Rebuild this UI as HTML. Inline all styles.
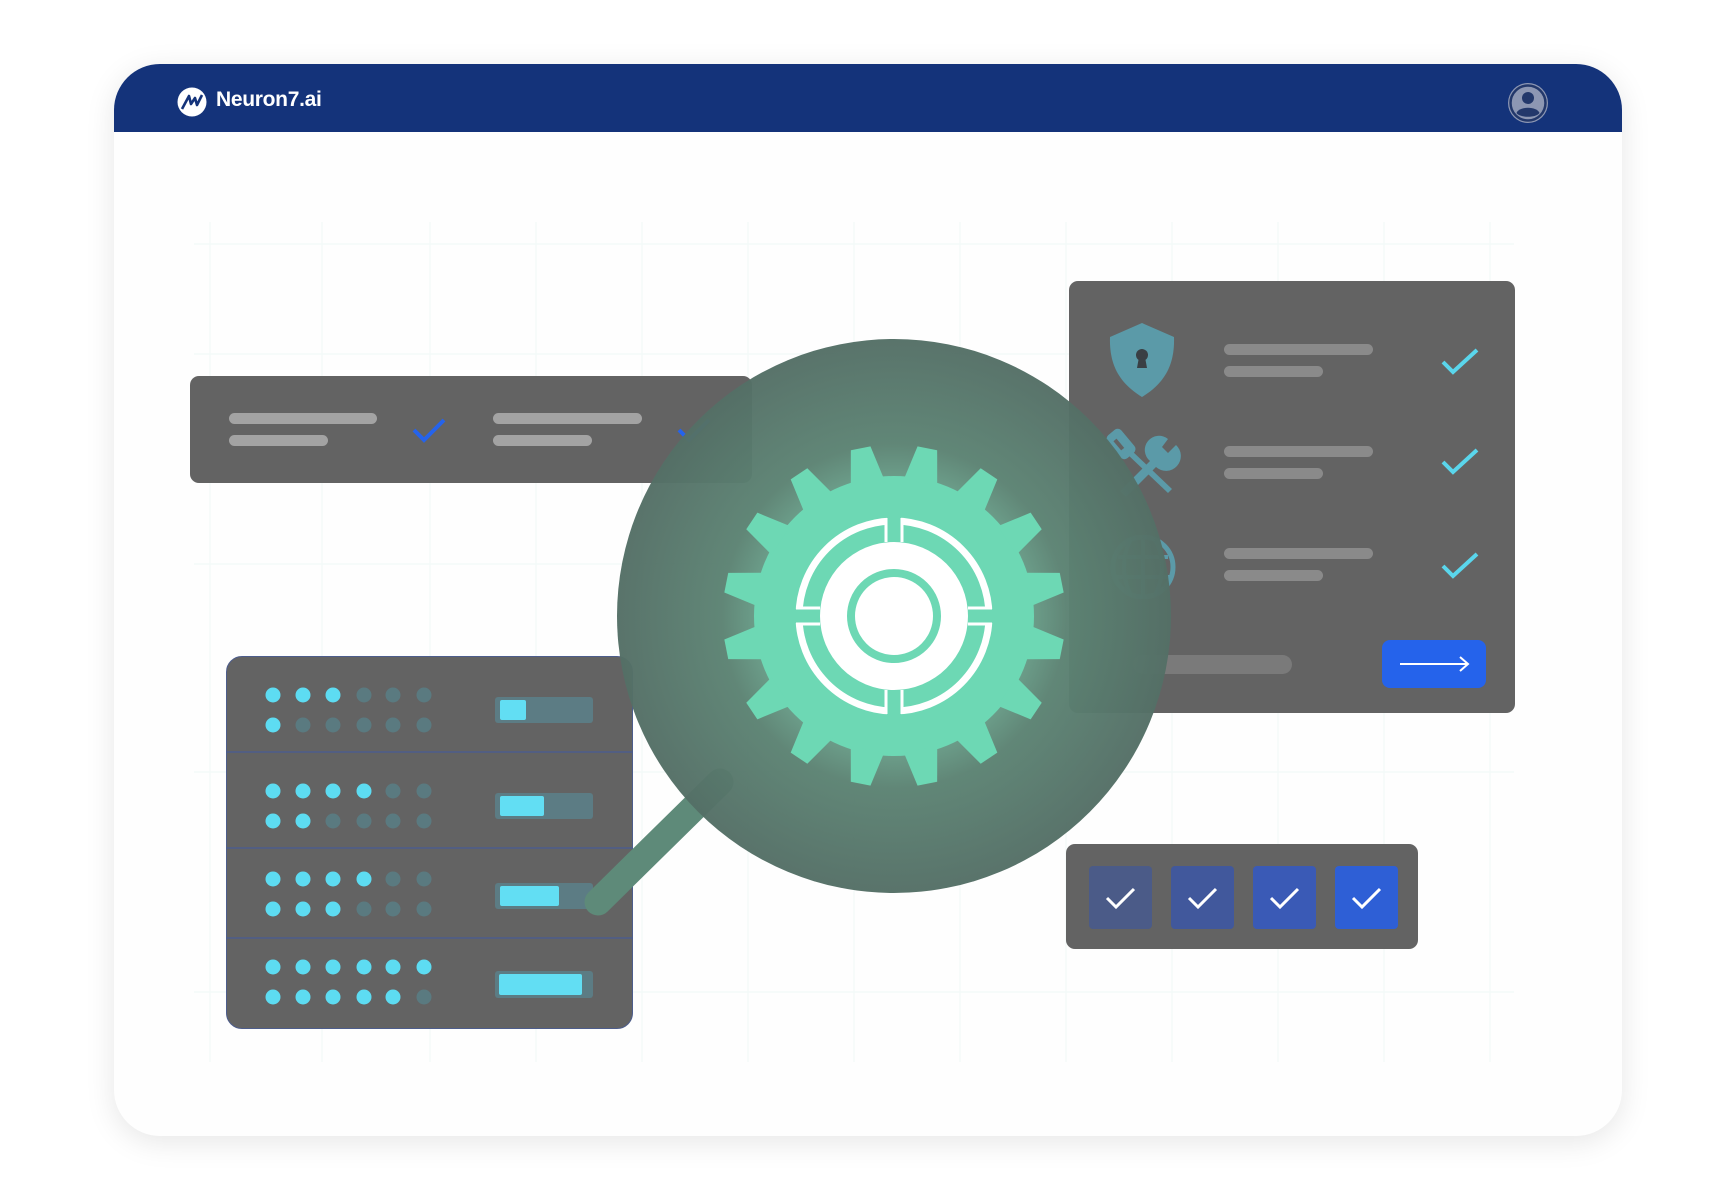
<!DOCTYPE html>
<html><head><meta charset="utf-8"><style>
html,body{margin:0;padding:0;background:#fff;}
body{width:1734px;height:1200px;position:relative;overflow:hidden;font-family:"Liberation Sans",sans-serif;}
.card{position:absolute;left:114px;top:64px;width:1508px;height:1072px;border-radius:46px;background:#fefefe;box-shadow:0 6px 30px rgba(0,0,0,0.10);overflow:hidden;}
.hdr{position:absolute;left:0;top:0;width:100%;height:68px;background:#14337a;}
.abs{position:absolute;}
.panel{position:absolute;background:#636363;border-radius:9px;}
.ln{position:absolute;background:#a3a3a3;border-radius:6px;height:11px;}
.ln2{position:absolute;background:#8a8a8a;border-radius:6px;height:11px;}
</style></head><body>
<div class="card">
  <div class="hdr">
    <svg class="abs" style="left:63px;top:23px" width="30" height="30" viewBox="0 0 30 30">
      <circle cx="15" cy="15" r="14.5" fill="#fff"/>
      <path d="M5 22 L12 9 L14 17 L18 11 L20 18 L25 8" fill="none" stroke="#14337a" stroke-width="2.6" stroke-linejoin="round"/>
    </svg>
    <div class="abs" style="left:102px;top:24px;color:#fff;font-size:21px;font-weight:bold;letter-spacing:-0.3px;">Neuron7.ai</div>
    <svg class="abs" style="left:1393px;top:18px" width="42" height="42" viewBox="0 0 42 42">
      <circle cx="21" cy="21" r="20" fill="#8d97b3"/>
      <circle cx="21" cy="21" r="17.5" fill="none" stroke="#23386b" stroke-width="2.5"/>
      <circle cx="21" cy="16" r="6" fill="#23386b"/>
      <path d="M9.5 31 C12 24 30 24 32.5 31 C29 36 13 36 9.5 31Z" fill="#23386b"/>
    </svg>
  </div>
  <svg class="abs" style="left:0;top:68px" width="1508" height="1004">
    <g stroke="#f2f9f8" stroke-width="1.2" fill="none">
      <path d="M96 90V930 M208 90V930 M316 90V930 M422 90V930 M528 90V930 M634 90V930 M740 90V930 M846 90V930 M952 90V930 M1058 90V930 M1164 90V930 M1270 90V930 M1376 90V930"/>
      <path d="M80 112H1400 M80 222H1400 M80 432H1400 M80 640H1400 M80 860H1400"/>
    </g>
  </svg>
</div>

<div class="panel" style="left:190px;top:376px;width:562px;height:107px;">
  <div class="ln" style="left:39px;top:37px;width:148px"></div>
  <div class="ln" style="left:39px;top:59px;width:99px"></div>
  <svg class="abs" style="left:220px;top:40px" width="40" height="30"><path d="M4 14 L14 24 L34 4" fill="none" stroke="#2563eb" stroke-width="4"/></svg>
  <div class="ln" style="left:303px;top:37px;width:149px"></div>
  <div class="ln" style="left:303px;top:59px;width:99px"></div>
  <svg class="abs" style="left:485px;top:40px" width="40" height="30"><path d="M4 14 L14 24 L34 4" fill="none" stroke="#2563eb" stroke-width="4"/></svg>
</div>

<div class="panel" style="left:1069px;top:281px;width:446px;height:432px;">
  <svg class="abs" style="left:39px;top:41px" width="68" height="76" viewBox="0 0 68 76">
    <path d="M34 1 L66 15 C67 45 55 62 34 75 C13 62 1 45 2 15 Z" fill="#5b9aa8"/>
    <circle cx="34" cy="33" r="6" fill="#3a3f44"/><path d="M31 35 L29 46 H39 L37 35Z" fill="#3a3f44"/>
  </svg>
  <div class="ln2" style="left:155px;top:63px;width:149px"></div>
  <div class="ln2" style="left:155px;top:85px;width:99px"></div>
  <svg class="abs" style="left:370px;top:65px" width="42" height="32"><path d="M4 16 L14 26 L38 4" fill="none" stroke="#5ad6ec" stroke-width="4"/></svg>
  <svg class="abs" style="left:37px;top:144px" width="76" height="72" viewBox="0 0 76 72">
    <g fill="#5b9aa8"><rect x="6" y="4" width="18" height="30" rx="5" transform="rotate(-40 15 19)"/>
    <path d="M20 28 L62 68 L66 64 L24 24Z"/>
    <path d="M14 66 L44 36 A14 14 0 0 1 62 14 L56 22 L62 28 L70 20 A14 14 0 0 1 50 42 L20 72Z"/></g>
    <rect x="11" y="12" width="4" height="12" fill="#636363" transform="rotate(-40 15 19)"/>
  </svg>
  <div class="ln2" style="left:155px;top:165px;width:149px"></div>
  <div class="ln2" style="left:155px;top:187px;width:99px"></div>
  <svg class="abs" style="left:370px;top:165px" width="42" height="32"><path d="M4 16 L14 26 L38 4" fill="none" stroke="#5ad6ec" stroke-width="4"/></svg>
  <svg class="abs" style="left:39px;top:254px" width="70" height="64" viewBox="0 0 70 64">
    <circle cx="35" cy="32" r="30" fill="none" stroke="#5b9aa8" stroke-width="5"/>
    <path d="M10 22H60 M8 42H62 M35 3V61 M22 6C14 22 14 42 22 58 M48 6C56 22 56 42 48 58" stroke="#5b9aa8" stroke-width="4" fill="none"/>
  </svg>
  <div class="ln2" style="left:155px;top:267px;width:149px"></div>
  <div class="ln2" style="left:155px;top:289px;width:99px"></div>
  <svg class="abs" style="left:370px;top:269px" width="42" height="32"><path d="M4 16 L14 26 L38 4" fill="none" stroke="#5ad6ec" stroke-width="4"/></svg>
  <div class="abs" style="left:64px;top:374px;width:159px;height:19px;border-radius:10px;background:#7a7a7a"></div>
  <div class="abs" style="left:313px;top:359px;width:104px;height:48px;border-radius:8px;background:#2563eb">
    <svg class="abs" style="left:16px;top:14px" width="74" height="20"><path d="M2 10H70 M62 3 L70 10 L62 17" fill="none" stroke="#fff" stroke-width="2"/></svg>
  </div>
</div>

<div class="panel" style="left:226px;top:656px;width:407px;height:373px;border:1px solid #4d5d8c;box-sizing:border-box;border-radius:16px;"></div>
<svg class="abs" style="left:226px;top:656px" width="407" height="373">
  <g stroke="#4d5d8c" stroke-width="1.5"><path d="M0 96H407 M0 192H407 M0 282H407"/></g>
  <g fill="#5c7c84">
    <rect x="269" y="41" width="98" height="26" rx="3"/><rect x="269" y="137" width="98" height="26" rx="3"/>
    <rect x="269" y="227" width="98" height="26" rx="3"/><rect x="269" y="315" width="98" height="27" rx="3"/>
  </g>
  <g fill="#62def3">
    <rect x="274" y="44" width="26" height="20" rx="2"/><rect x="274" y="140" width="44" height="20" rx="2"/>
    <rect x="274" y="230" width="59" height="20" rx="2"/><rect x="273" y="318" width="83" height="21" rx="2"/>
  </g>
  <g>
    <g fill="#5ddcf2"><circle cx="47" cy="39" r="7.5"/><circle cx="77" cy="39" r="7.5"/><circle cx="107" cy="39" r="7.5"/><circle cx="47" cy="69" r="7.5"/></g>
    <g fill="#5a7a80"><circle cx="138" cy="39" r="7.5"/><circle cx="167" cy="39" r="7.5"/><circle cx="198" cy="39" r="7.5"/><circle cx="77" cy="69" r="7.5"/><circle cx="107" cy="69" r="7.5"/><circle cx="138" cy="69" r="7.5"/><circle cx="167" cy="69" r="7.5"/><circle cx="198" cy="69" r="7.5"/></g>
    <g fill="#5ddcf2"><circle cx="47" cy="135" r="7.5"/><circle cx="77" cy="135" r="7.5"/><circle cx="107" cy="135" r="7.5"/><circle cx="138" cy="135" r="7.5"/><circle cx="47" cy="165" r="7.5"/><circle cx="77" cy="165" r="7.5"/></g>
    <g fill="#5a7a80"><circle cx="167" cy="135" r="7.5"/><circle cx="198" cy="135" r="7.5"/><circle cx="107" cy="165" r="7.5"/><circle cx="138" cy="165" r="7.5"/><circle cx="167" cy="165" r="7.5"/><circle cx="198" cy="165" r="7.5"/></g>
    <g fill="#5ddcf2"><circle cx="47" cy="223" r="7.5"/><circle cx="77" cy="223" r="7.5"/><circle cx="107" cy="223" r="7.5"/><circle cx="138" cy="223" r="7.5"/><circle cx="47" cy="253" r="7.5"/><circle cx="77" cy="253" r="7.5"/><circle cx="107" cy="253" r="7.5"/></g>
    <g fill="#5a7a80"><circle cx="167" cy="223" r="7.5"/><circle cx="198" cy="223" r="7.5"/><circle cx="138" cy="253" r="7.5"/><circle cx="167" cy="253" r="7.5"/><circle cx="198" cy="253" r="7.5"/></g>
    <g fill="#5ddcf2"><circle cx="47" cy="311" r="7.5"/><circle cx="77" cy="311" r="7.5"/><circle cx="107" cy="311" r="7.5"/><circle cx="138" cy="311" r="7.5"/><circle cx="167" cy="311" r="7.5"/><circle cx="198" cy="311" r="7.5"/><circle cx="47" cy="341" r="7.5"/><circle cx="77" cy="341" r="7.5"/><circle cx="107" cy="341" r="7.5"/><circle cx="138" cy="341" r="7.5"/><circle cx="167" cy="341" r="7.5"/></g>
    <g fill="#5a7a80"><circle cx="198" cy="341" r="7.5"/></g>
  </g>
</svg>

<div class="panel" style="left:1066px;top:844px;width:352px;height:105px;">
  <svg class="abs" style="left:0;top:0" width="352" height="105">
    <rect x="23" y="22" width="63" height="63" rx="4" fill="#4b5b88"/>
    <rect x="105" y="22" width="63" height="63" rx="4" fill="#41589c"/>
    <rect x="187" y="22" width="63" height="63" rx="4" fill="#3a5ab6"/>
    <rect x="269" y="22" width="63" height="63" rx="4" fill="#2e5fd6"/>
    <g fill="none" stroke="#fff" stroke-width="3"><path d="M41 54 L50 63 L68 45"/><path d="M123 54 L132 63 L150 45"/><path d="M205 54 L214 63 L232 45"/><path d="M287 54 L296 63 L314 45"/></g>
  </svg>
</div>

<svg class="abs" style="left:0;top:0" width="1734" height="1200">
  <defs>
    <radialGradient id="cg" cx="0.5" cy="0.5" r="0.5">
      <stop offset="0" stop-color="#86d1b4"/>
      <stop offset="0.4" stop-color="#70ad95"/>
      <stop offset="0.62" stop-color="#5c8373"/>
      <stop offset="1" stop-color="#546f66"/>
    </radialGradient>
  </defs>
  <line x1="598" y1="902" x2="720" y2="782" stroke="#5e8a79" stroke-width="27" stroke-linecap="round"/>
  <circle cx="894" cy="616" r="277" fill="url(#cg)" opacity="0.97"/>
  <g transform="translate(894,616)">
    <g fill="#6dd8b4">
      <circle r="140"/>
      <g id="t"><path d="M-17 -136 L-10 -171 L10 -171 L17 -136Z" transform="rotate(11.25)"/></g>
      <use href="#t" transform="rotate(22.5)"/><use href="#t" transform="rotate(45)"/><use href="#t" transform="rotate(67.5)"/>
      <use href="#t" transform="rotate(90)"/><use href="#t" transform="rotate(112.5)"/><use href="#t" transform="rotate(135)"/>
      <use href="#t" transform="rotate(157.5)"/><use href="#t" transform="rotate(180)"/><use href="#t" transform="rotate(202.5)"/>
      <use href="#t" transform="rotate(225)"/><use href="#t" transform="rotate(247.5)"/><use href="#t" transform="rotate(270)"/>
      <use href="#t" transform="rotate(292.5)"/><use href="#t" transform="rotate(315)"/><use href="#t" transform="rotate(337.5)"/>
    </g>
    <circle r="95" fill="none" stroke="#fff" stroke-width="7"/>
    <g fill="#6dd8b4"><rect x="-7" y="-102" width="14" height="30"/><rect x="-7" y="72" width="14" height="30"/><rect x="-102" y="-7" width="30" height="14"/><rect x="72" y="-7" width="30" height="14"/></g>
    <g fill="none" stroke="#fff" stroke-width="3"><path d="M-8 -98V-74 M8 -98V-74 M-8 98V74 M8 98V74 M-98 -8H-74 M-98 8H-74 M98 -8H74 M98 8H74"/></g>
    <circle r="74" fill="#fff"/>
    <circle r="43" fill="none" stroke="#6dd8b4" stroke-width="8"/>
  </g>
</svg>
</body></html>
